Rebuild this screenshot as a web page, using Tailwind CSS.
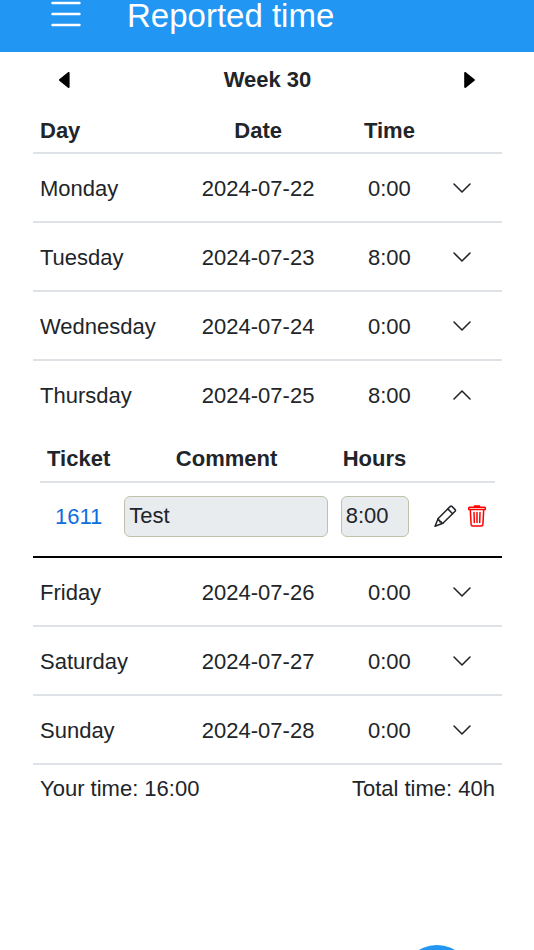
<!DOCTYPE html>
<html lang="en">
<head>
  <meta charset="UTF-8" />
  <meta name="viewport" content="width=device-width, initial-scale=1.0" />
  <title>Reported time</title>
  <script src="https://cdn.jsdelivr.net/npm/@tailwindcss/browser@4"></script>
</head>
<body class="min-h-screen overflow-x-hidden bg-white text-[#212529] text-[22px] leading-8 font-['Liberation_Sans',Arial,sans-serif]">

  <!-- Header -->
  <header class="flex items-start bg-[#2196f3] pl-[50px] pb-5 text-white">
    <button type="button" aria-label="Menu" class="h-7 w-8">
      <svg class="h-7 w-8" viewBox="0 0 32 28" fill="none" stroke="currentColor" stroke-width="2.4" stroke-linecap="round">
        <path d="M2.5 3h27M2.5 14h27M2.5 25h27" />
      </svg>
    </button>
    <h1 class="ml-[45px] text-[33px] leading-8">Reported time</h1>
  </header>

  <main class="pl-[33px] pr-8">
    <!-- Week picker -->
    <div class="flex h-14 items-center justify-between px-6">
      <button type="button" aria-label="Previous week" class="h-4 w-4">
        <svg class="h-4 w-4" viewBox="0 0 16 16" fill="#000"><path d="M2.3 7.3 11 .2c.6-.5 1.6-.2 1.6.7v14.2c0 .9-1 1.2-1.6.7L2.3 8.7c-.5-.4-.5-1 0-1.4z" /></svg>
      </button>
      <h2 class="font-bold">Week 30</h2>
      <button type="button" aria-label="Next week" class="h-4 w-4">
        <svg class="h-4 w-4" viewBox="0 0 16 16" fill="#000"><path d="M12.5 7.3 3.8.2C3.200-.3 2.200 0 2.200.9v14.200c0 .9 1 1.200 1.600.7l8.700-7.100c.5-.4.5-1 0-1.400z" /></svg>
      </button>
    </div>

    <!-- Days -->
    <table class="w-full table-fixed border-separate border-spacing-0">
      <thead>
        <tr class="h-[46px] *:border-b-2 *:border-[#dee2e6] *:pt-0.5">
          <th class="w-[27%] pl-[7px] text-left">Day</th>
          <th class="w-[42%]">Date</th>
          <th class="w-[14%]">Time</th>
          <th class="w-[17%]"></th>
        </tr>
      </thead>
      <tbody id="days"></tbody>
    </table>

    <!-- Totals -->
    <div class="flex h-12 items-center justify-between px-[7px]">
      <p>Your time: 16:00</p>
      <p>Total time: 40h</p>
    </div>
  </main>

  <!-- Add button -->
  <button type="button" aria-label="Add time" class="fixed -bottom-[67px] right-[61px] h-[72px] w-[72px] rounded-full bg-[#2196f3]"></button>

  <!-- Entries of an open day -->
  <template id="entries">
    <tr>
      <td colspan="4" class="border-b-2 border-black p-[7px]">
        <table class="w-full table-fixed border-separate border-spacing-0">
          <thead>
            <tr class="h-12 *:border-b-2 *:border-[#dee2e6] *:pt-0.5">
              <th class="w-[17%]">Ticket</th>
              <th class="w-[48%]">Comment</th>
              <th class="w-[17%]">Hours</th>
              <th class="w-[18%]"></th>
            </tr>
          </thead>
          <tbody>
            <tr class="h-[66px]">
              <td class="pt-0.5 text-center"><a href="#" class="text-[#0d6edd]">1611</a></td>
              <td class="pl-[7px] pr-2"><input type="text" aria-label="Comment" value="Test" readonly class="block h-[41px] w-full rounded-md border border-[#bfc2a8] bg-[#e9ecef] px-1" /></td>
              <td class="pl-[5px] pr-1"><input type="text" aria-label="Hours" value="8:00" readonly class="block h-[41px] w-full rounded-md border border-[#bfc2a8] bg-[#e9ecef] px-1" /></td>
              <td>
                <div class="flex items-center justify-end gap-2.5 pr-2">
                  <button type="button" aria-label="Edit">
                    <svg class="h-6 w-6" viewBox="0 0 24 24" fill="none" stroke="#212529" stroke-width="1.5" stroke-linejoin="round" stroke-linecap="round">
                      <path d="M2 22.3 5.2 14.5 17.3 2.4c.5-.5 1.1-.5 1.6 0l3.2 3.2c.5.5.5 1.1 0 1.6L9.9 19.2z" />
                      <path d="m14.8 4.9 4.8 4.8M5.2 14.5v1.7h1.500v1.500h1.500v1.500h1.700" />
                    </svg>
                  </button>
                  <button type="button" aria-label="Delete">
                    <svg class="h-6 w-5" viewBox="0 0 20 24" fill="none" stroke="#f00" stroke-width="1.5" stroke-linejoin="round" stroke-linecap="round">
                      <path d="M2.5 3.2h15c.5 0 .8.3.8.8v1.400H1.700V4c0-.5.3-.8.8-.8zM7.500 2.800V2h5v.8M3.300 5.600l.8 14.800c.1.9.7 1.500 1.600 1.500h8.600c.9 0 1.500-.6 1.600-1.500l.8-14.800M7 8.500l.3 10M10 8.500v10M13 8.500l-.3 10" />
                    </svg>
                  </button>
                </div>
              </td>
            </tr>
          </tbody>
        </table>
      </td>
    </tr>
  </template>

  <!-- Scripts -->
  <script>
    const days = [
      { name: "Monday", date: "2024-07-22", time: "0:00" },
      { name: "Tuesday", date: "2024-07-23", time: "8:00" },
      { name: "Wednesday", date: "2024-07-24", time: "0:00" },
      { name: "Thursday", date: "2024-07-25", time: "8:00", open: true },
      { name: "Friday", date: "2024-07-26", time: "0:00" },
      { name: "Saturday", date: "2024-07-27", time: "0:00" },
      { name: "Sunday", date: "2024-07-28", time: "0:00" }
    ];

    const tbody = document.getElementById('days');

    days.forEach((day) => {
      const rowClass = day.open ? 'h-[67px]' : 'h-[69px] *:border-b-2 *:border-[#dee2e6]';
      const arrow = day.open ? 'm2 14 8-8 8 8' : 'm2 6 8 8 8-8';
      tbody.insertAdjacentHTML('beforeend', `
        <tr class="${rowClass}">
          <td class="pl-[7px] pt-0.5">${day.name}</td>
          <td class="pt-0.5 text-center">${day.date}</td>
          <td class="pt-0.5 text-center">${day.time}</td>
          <td>
            <button type="button" aria-label="Toggle ${day.name}" class="mx-auto block h-5 w-5">
              <svg class="h-5 w-5" viewBox="0 0 20 20" fill="none" stroke="#212529" stroke-width="1.6" stroke-linecap="round" stroke-linejoin="round"><path d="${arrow}" /></svg>
            </button>
          </td>
        </tr>
      `);
      if (day.open) {
        tbody.appendChild(document.getElementById('entries').content.cloneNode(true));
      }
    });
  </script>

</body>
</html>
